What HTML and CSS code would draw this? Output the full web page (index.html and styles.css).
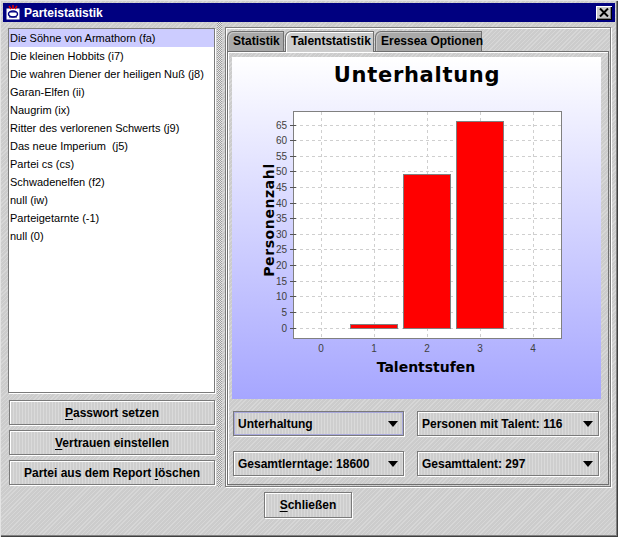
FILE: index.html
```html
<!DOCTYPE html>
<html lang="de">
<head>
<meta charset="utf-8">
<title>Parteistatistik</title>
<link rel="stylesheet" href="styles.css">
</head>
<body>
<div class="window">
  <div class="titlebar">
    <svg class="appicon" width="16" height="16" viewBox="0 0 16 16">
      <rect x="1" y="3" width="14" height="12" fill="#fff" stroke="#000080"/>
      <path d="M4 1 L6 4 M8 0 L8 4 M12 1 L10 4" stroke="#e00000" stroke-width="1.5"/>
      <ellipse cx="8" cy="9" rx="4.5" ry="3" fill="none" stroke="#000080" stroke-width="1.5"/>
      <path d="M4 12 L12 12 M5 7 L11 7" stroke="#000080" stroke-width="1"/>
    </svg>
    <span class="title">Parteistatistik</span>
    <span class="closebtn"><svg width="10" height="9" viewBox="0 0 10 9"><path d="M1 0.5 L9 8.5 M9 0.5 L1 8.5" stroke="#000" stroke-width="2"/></svg></span>
  </div>
  <div class="content">
    <div class="split">
      <div class="leftpane">
        <ul class="list">
          <li class="sel">Die Söhne von Armathorn (fa)</li>
          <li>Die kleinen Hobbits (i7)</li>
          <li>Die wahren Diener der heiligen Nuß (j8)</li>
          <li>Garan-Elfen (ii)</li>
          <li>Naugrim (ix)</li>
          <li>Ritter des verlorenen Schwerts (j9)</li>
          <li>Das neue Imperium&nbsp; (j5)</li>
          <li>Partei cs (cs)</li>
          <li>Schwadenelfen (f2)</li>
          <li>null (iw)</li>
          <li>Parteigetarnte (-1)</li>
          <li>null (0)</li>
        </ul>
        <div class="btncol">
          <div class="btn"><span><u>P</u>asswort setzen</span></div>
          <div class="btn"><span><u>V</u>ertrauen einstellen</span></div>
          <div class="btn"><span>Partei aus dem Report <u>l</u>öschen</span></div>
        </div>
      </div>
      <div class="divider"></div>
      <div class="tabpane">
        <div class="tabrow">
          <div class="tab t1">Statistik</div>
          <div class="tab t2 active">Talentstatistik</div>
          <div class="tab t3">Eressea Optionen</div>
        </div>
        <div class="tabbody">
          <div class="chart">
            <svg width="369" height="342" viewBox="0 0 369 342" class="chartsvg">
              <text x="185" y="25" class="ctitle" text-anchor="middle">Unterhaltung</text>
              <rect x="61.5" y="54.5" width="268" height="227" fill="#fff" stroke="#808080"/>
              <g stroke="#cfcfcf" stroke-dasharray="3,3" stroke-width="1">
                <line x1="62" x2="329" y1="271.5" y2="271.5"/>
                <line x1="62" x2="329" y1="255.5" y2="255.5"/>
                <line x1="62" x2="329" y1="239.5" y2="239.5"/>
                <line x1="62" x2="329" y1="224.5" y2="224.5"/>
                <line x1="62" x2="329" y1="208.5" y2="208.5"/>
                <line x1="62" x2="329" y1="192.5" y2="192.5"/>
                <line x1="62" x2="329" y1="177.5" y2="177.5"/>
                <line x1="62" x2="329" y1="161.5" y2="161.5"/>
                <line x1="62" x2="329" y1="146.5" y2="146.5"/>
                <line x1="62" x2="329" y1="130.5" y2="130.5"/>
                <line x1="62" x2="329" y1="114.5" y2="114.5"/>
                <line x1="62" x2="329" y1="99.5" y2="99.5"/>
                <line x1="62" x2="329" y1="83.5" y2="83.5"/>
                <line x1="62" x2="329" y1="68.5" y2="68.5"/>
                <line x1="89.5" x2="89.5" y1="55" y2="281"/>
                <line x1="142.5" x2="142.5" y1="55" y2="281"/>
                <line x1="195.5" x2="195.5" y1="55" y2="281"/>
                <line x1="248.5" x2="248.5" y1="55" y2="281"/>
                <line x1="301.5" x2="301.5" y1="55" y2="281"/>
              </g>
              <g stroke="#555" stroke-width="1">
                <line x1="58" x2="64" y1="271.5" y2="271.5"/>
                <line x1="58" x2="64" y1="255.5" y2="255.5"/>
                <line x1="58" x2="64" y1="239.5" y2="239.5"/>
                <line x1="58" x2="64" y1="224.5" y2="224.5"/>
                <line x1="58" x2="64" y1="208.5" y2="208.5"/>
                <line x1="58" x2="64" y1="192.5" y2="192.5"/>
                <line x1="58" x2="64" y1="177.5" y2="177.5"/>
                <line x1="58" x2="64" y1="161.5" y2="161.5"/>
                <line x1="58" x2="64" y1="146.5" y2="146.5"/>
                <line x1="58" x2="64" y1="130.5" y2="130.5"/>
                <line x1="58" x2="64" y1="114.5" y2="114.5"/>
                <line x1="58" x2="64" y1="99.5" y2="99.5"/>
                <line x1="58" x2="64" y1="83.5" y2="83.5"/>
                <line x1="58" x2="64" y1="68.5" y2="68.5"/>
              </g>
              <g class="ticklbl" text-anchor="end">
                <text x="55" y="275">0</text>
                <text x="55" y="259">5</text>
                <text x="55" y="243">10</text>
                <text x="55" y="228">15</text>
                <text x="55" y="212">20</text>
                <text x="55" y="196">25</text>
                <text x="55" y="181">30</text>
                <text x="55" y="165">35</text>
                <text x="55" y="150">40</text>
                <text x="55" y="134">45</text>
                <text x="55" y="118">50</text>
                <text x="55" y="103">55</text>
                <text x="55" y="87">60</text>
                <text x="55" y="72">65</text>
              </g>
              <g class="ticklbl" text-anchor="middle">
                <text x="89" y="295">0</text>
                <text x="142" y="295">1</text>
                <text x="195" y="295">2</text>
                <text x="248" y="295">3</text>
                <text x="301" y="295">4</text>
              </g>
              <g fill="#ff0000" stroke="#808080" stroke-width="1">
                <rect x="118.5" y="267.5" width="47" height="4"/>
                <rect x="171.5" y="117.5" width="47" height="154"/>
                <rect x="224.5" y="64.5" width="47" height="207"/>
              </g>
              <text class="alabel" x="194" y="315" text-anchor="middle">Talentstufen</text>
              <text class="alabel ylabel" transform="translate(42,163) rotate(-90)" text-anchor="middle">Personenzahl</text>
            </svg>
          </div>
          <div class="combos">
            <div class="combo focus"><span>Unterhaltung</span><i class="arrow"></i></div>
            <div class="combo"><span>Personen mit Talent: 116</span><i class="arrow"></i></div>
            <div class="combo"><span>Gesamtlerntage: 18600</span><i class="arrow"></i></div>
            <div class="combo"><span>Gesamttalent: 297</span><i class="arrow"></i></div>
          </div>
        </div>
      </div>
    </div>
    <div class="footer">
      <div class="btn closeb"><span><u>S</u>chließen</span></div>
    </div>
  </div>
</div>
</body>
</html>
```
FILE: styles.css
```css
* { box-sizing: border-box; }
html, body { margin: 0; padding: 0; }
body {
  width: 618px;
  height: 537px;
  overflow: hidden;
  font-family: "Liberation Sans", Arial, sans-serif;
  background: #c8c8c8;
}
.window {
  width: 618px;
  height: 537px;
  padding: 3px 3px 3px 3px;
  display: flex;
  flex-direction: column;
  background-color: #cccccc;
  background-image: repeating-linear-gradient(135deg, rgba(255,255,255,0.22) 0 1px, rgba(0,0,0,0) 1px 3px);
  box-shadow: inset 1px 1px 0 #e4e4e4, inset -1px -1px 0 #404040, inset -2px -2px 0 #808080;
}
.titlebar {
  height: 19px;
  background: #000080;
  display: flex;
  align-items: center;
  padding-left: 2px;
  padding-right: 3px;
  flex: none;
}
.appicon { display: block; flex: none; }
.title {
  color: #fff;
  font-weight: bold;
  font-size: 12px;
  margin-left: 3px;
  flex: 1;
}
.closebtn {
  width: 16px;
  height: 14px;
  background: #c8c8c8;
  display: flex;
  align-items: center;
  justify-content: center;
  box-shadow: inset 1px 1px 0 #fff, inset -1px -1px 0 #000, inset -2px -2px 0 #808080;
}
.closebtn svg { display: block; }
.content {
  flex: 1;
  display: flex;
  flex-direction: column;
}
.split {
  display: flex;
  height: 465px;
  padding-top: 6px;
  padding-left: 5px;
}
.leftpane {
  width: 207px;
  display: flex;
  flex-direction: column;
}
.list {
  list-style: none;
  margin: 0;
  padding: 0;
  height: 365px;
  background: #fff;
  border: 1px solid #7a7a7a;
  box-shadow: 1px 1px 0 #fff;
  font-size: 11px;
  color: #000;
}
.list li {
  height: 18px;
  line-height: 18px;
  padding-left: 1px;
  white-space: nowrap;
}
.list li.sel { background: #ccccff; }
.btncol {
  display: flex;
  flex-direction: column;
  gap: 5px;
  margin-top: 7px;
  margin-left: 1px;
}
.btn {
  height: 25px;
  display: flex;
  align-items: center;
  justify-content: center;
  font-weight: bold;
  font-size: 12px;
  color: #000;
  white-space: pre;
  border: 1px solid #7a7a7a;
  box-shadow: inset 1px 1px 0 #fff, 1px 1px 0 #fff;
  background-color: #cecece;
  background-image: repeating-linear-gradient(90deg, rgba(255,255,255,0.25) 0 1px, rgba(0,0,0,0) 1px 3px);
}
.btn u { text-decoration: underline; text-underline-offset: 2px; }
.divider {
  width: 10px;
  flex: none;
  background-image: repeating-conic-gradient(#9c9c9c 0 25%, #e6e6e6 0 50%);
  background-size: 2px 2px;
  background-clip: content-box;
  padding: 0 3px 0 2px;
  margin-top: -6px;
}
.tabpane {
  width: 386px;
  height: 460px;
  margin-top: -1px;
  border: 1px solid #7a7a7a;
  box-shadow: inset 1px 1px 0 #fff, 1px 1px 0 #fff;
  padding: 3px 1px 1px 1px;
  display: flex;
  flex-direction: column;
}
.tabrow {
  display: flex;
  height: 20px;
  gap: 1px;
  position: relative;
  z-index: 1;
}
.tab {
  height: 20px;
  font-weight: bold;
  font-size: 12px;
  line-height: 19px;
  padding-left: 5px;
  background: #a9a9a9;
  border: 1px solid #6f6f6f;
  border-bottom: none;
  border-top-left-radius: 6px;
  box-shadow: inset 1px 1px 0 #c8c8c8;
  white-space: nowrap;
}
.tab.active {
  background: #cccccc;
  height: 21px;
  box-shadow: inset 1px 1px 0 #fff;
}
.t1 { width: 57px; }
.t2 { width: 89px; }
.t3 { width: 107px; }
.tabbody {
  flex: 1;
  border: 1px solid #6f6f6f;
  box-shadow: inset 1px 1px 0 #fff;
  padding: 5px 7px 7px 4px;
  display: flex;
  flex-direction: column;
}
.chart {
  width: 369px;
  height: 342px;
  background: linear-gradient(180deg, #ffffff 0%, #a6a6ff 100%);
}
.chartsvg { display: block; }
.ctitle {
  font-family: "DejaVu Sans", sans-serif;
  font-weight: bold;
  font-size: 21px;
  letter-spacing: 0.7px;
  fill: #000;
}
.ticklbl text {
  font-family: "Liberation Sans", Arial, sans-serif;
  font-size: 10px;
  fill: #404040;
}
.alabel {
  font-family: "DejaVu Sans", sans-serif;
  font-weight: bold;
  font-size: 14px;
  fill: #000;
}
.ylabel { letter-spacing: 0.6px; }
.combos {
  display: grid;
  grid-template-columns: 171px 182px;
  grid-auto-rows: 25px;
  column-gap: 13px;
  row-gap: 15px;
  margin-top: 12px;
  margin-left: 1px;
}
.combo {
  display: flex;
  align-items: center;
  justify-content: space-between;
  padding: 0 5px 0 4px;
  font-weight: bold;
  font-size: 12px;
  color: #000;
  border: 1px solid #7a7a7a;
  box-shadow: inset 1px 1px 0 #fff, 1px 1px 0 #fff;
  background-color: #cecece;
  background-image: repeating-linear-gradient(90deg, rgba(255,255,255,0.25) 0 1px, rgba(0,0,0,0) 1px 3px);
}
.combo.focus {
  box-shadow: inset 0 0 0 1px #a8a8dc, 1px 1px 0 #fff;
}
.arrow {
  width: 0;
  height: 0;
  border-left: 5px solid transparent;
  border-right: 5px solid transparent;
  border-top: 6px solid #000;
}
.footer {
  flex: 1;
  display: flex;
  justify-content: center;
  padding-top: 5px;
  padding-right: 2px;
}
.closeb {
  width: 88px;
  height: 26px;
}
```
